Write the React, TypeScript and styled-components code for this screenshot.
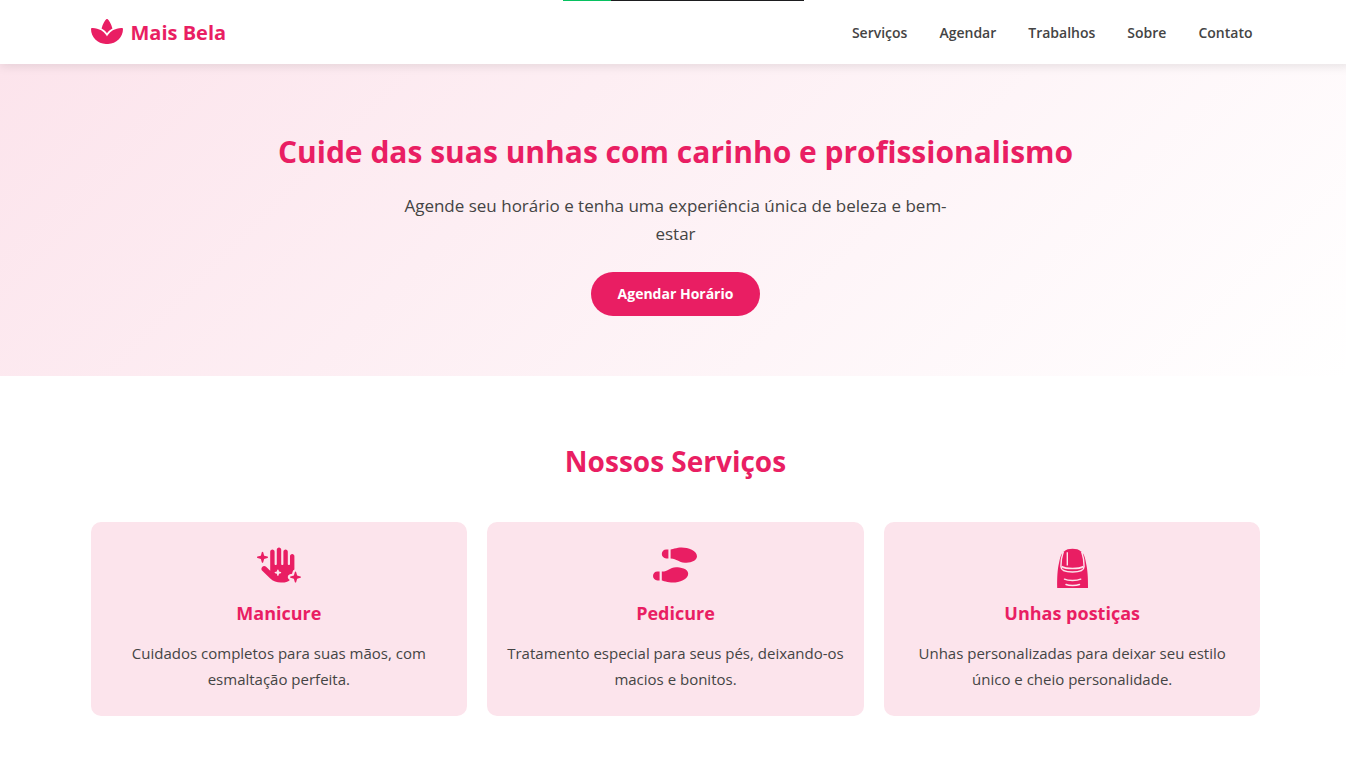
import React from "react";
import styled, { createGlobalStyle } from "styled-components";
import { FaSpa, FaHandSparkles, FaShoePrints } from "react-icons/fa6";

const pink = "#e91e63";
const blush = "#fce4ec";
const ink = "#444444";

const GlobalStyle = createGlobalStyle`
  *, *::before, *::after { box-sizing: border-box; }
  body {
    margin: 0;
    overflow-x: hidden;
    background: #ffffff;
    color: ${ink};
    font-family: "Segoe UI", "Open Sans", "Noto Sans", sans-serif;
    font-size: 15px;
    line-height: 26px;
  }
  h1, h2, h3, p, ul { margin: 0; padding: 0; }
`;

const Page = styled.div`
  position: relative;
  width: calc(100% + 5px);
`;

const Progress = styled.div`
  position: absolute;
  top: 0;
  left: 563px;
  z-index: 2;
  width: 241px;
  height: 1px;
  background: #1d1d1f;
`;

const ProgressFill = styled.div`
  width: 20%;
  height: 100%;
  background: #07c160;
`;

const Container = styled.div`
  max-width: 1200px;
  margin: 0 auto;
  padding: 0 15px;
`;

const Header = styled.header`
  position: relative;
  z-index: 1;
  background: #ffffff;
  box-shadow: 0 2px 10px rgba(0, 0, 0, 0.1);
`;

const HeaderRow = styled(Container)`
  display: flex;
  align-items: center;
  justify-content: space-between;
  min-height: 64px;
  padding-top: 2px;
`;

const Brand = styled.a`
  display: flex;
  align-items: center;
  gap: 8px;
  color: ${pink};
  font-size: 20px;
  font-weight: 700;
  text-decoration: none;

  svg {
    width: 32px;
    height: 29px;
    margin-bottom: 4px;
  }
`;

const NavList = styled.ul`
  display: flex;
  gap: 16px;
  list-style: none;
`;

const NavLink = styled.a`
  display: block;
  padding: 8px;
  color: ${ink};
  font-size: 14px;
  font-weight: 600;
  line-height: 24px;
  text-decoration: none;
`;

const Hero = styled.section`
  padding: 60px 0;
  background: linear-gradient(135deg, ${blush} 0%, #ffffff 100%);
  text-align: center;
`;

const HeroTitle = styled.h1`
  margin-bottom: 12px;
  color: ${pink};
  font-size: 30px;
  font-weight: 700;
  line-height: 56px;
`;

const HeroText = styled.p`
  max-width: 560px;
  margin: 0 auto 24px;
  font-size: 17px;
  line-height: 28px;
`;

const BookButton = styled.button`
  display: block;
  margin: 0 auto;
  padding: 12px 27px;
  border: 0;
  border-radius: 30px;
  background: ${pink};
  color: #ffffff;
  font-family: inherit;
  font-size: 14px;
  font-weight: 700;
  line-height: 20px;
  cursor: pointer;
`;

const Services = styled.section`
  padding: 60px 0 50px;
`;

const SectionTitle = styled.h2`
  margin-bottom: 36px;
  color: ${pink};
  font-size: 28px;
  font-weight: 700;
  line-height: 50px;
  text-align: center;
`;

const CardGrid = styled.div`
  display: grid;
  grid-template-columns: repeat(3, 1fr);
  gap: 20px;
`;

const Card = styled.article`
  padding: 25px 20px 24px;
  border-radius: 10px;
  background: ${blush};
  text-align: center;
`;

const IconSlot = styled.div`
  display: flex;
  align-items: flex-start;
  justify-content: center;
  height: 50px;
  color: ${pink};
`;

const GlyphIcon = styled.span`
  display: flex;

  svg {
    width: 44px;
    height: 36px;
  }
`;

const CardTitle = styled.h3`
  margin-bottom: 11px;
  color: ${pink};
  font-size: 18px;
  font-weight: 700;
  line-height: 32px;
`;

const CardText = styled.p`
  font-size: 15px;
  line-height: 26px;
`;

const NailIcon = () => (
  <svg width="40" height="41" viewBox="0 0 40 41" fill="none" aria-hidden="true">
    <path
      d="M5.2 41C5 31 5.5 22 7 16C7.8 12 8.6 8.5 10 6.5H31C32.5 8.500 33.300 12 34 16C35.500 22 36.200 31 36 41Z"
      fill={pink}
    />
    <path
      d="M12 4.500C14 2.500 17 1.800 20.500 1.800S27 2.500 29 4.500C31 8 32 14 32 20C30 22.500 26 24.500 20.500 24.500S11 22.500 9 20C9 14 10 8 12 4.500Z"
      fill={pink}
    />
    <path
      d="M11.200 5C9.600 9.500 8.900 14.500 8.900 19.500C8.900 23 13 25 20.500 25S32.100 23 32.100 19.500C32.100 14.500 31.400 9.500 29.800 5"
      stroke={blush}
      strokeWidth="1.400"
    />
    <path d="M9.500 19.500C14 22.300 27 22.300 31.500 19.500" stroke={blush} strokeWidth="1.500" />
    <path d="M15.300 5.300V18.500" stroke={blush} strokeWidth="1.400" />
    <path
      d="M12.500 32.200C16 34 25 34 28.700 32.200M14 37.500C17 38.800 24 38.800 27.500 37.500"
      stroke={blush}
      strokeWidth="1.500"
      strokeLinecap="round"
    />
  </svg>
);

const links = [
  { label: "Serviços", href: "#servicos" },
  { label: "Agendar", href: "#agendar" },
  { label: "Trabalhos", href: "#trabalhos" },
  { label: "Sobre", href: "#sobre" },
  { label: "Contato", href: "#contato" },
];

const services = [
  {
    title: "Manicure",
    text: "Cuidados completos para suas mãos, com esmaltação perfeita.",
    icon: <GlyphIcon><FaHandSparkles /></GlyphIcon>,
  },
  {
    title: "Pedicure",
    text: "Tratamento especial para seus pés, deixando-os macios e bonitos.",
    icon: <GlyphIcon><FaShoePrints /></GlyphIcon>,
  },
  {
    title: "Unhas postiças",
    text: "Unhas personalizadas para deixar seu estilo único e cheio personalidade.",
    icon: <NailIcon />,
  },
];

export default function App() {
  return (
    <Page>
      <GlobalStyle />
      <Progress>
        <ProgressFill />
      </Progress>
      <Header>
        <HeaderRow>
          <Brand href="#inicio">
            <FaSpa />
            Mais Bela
          </Brand>
          <nav>
            <NavList>
              {links.map((link) => (
                <li key={link.href}>
                  <NavLink href={link.href}>{link.label}</NavLink>
                </li>
              ))}
            </NavList>
          </nav>
        </HeaderRow>
      </Header>
      <main>
        <Hero id="inicio">
          <Container>
            <HeroTitle>Cuide das suas unhas com carinho e profissionalismo</HeroTitle>
            <HeroText>
              Agende seu horário e tenha uma experiência única de beleza e bem-estar
            </HeroText>
            <BookButton type="button">Agendar Horário</BookButton>
          </Container>
        </Hero>
        <Services id="servicos">
          <Container>
            <SectionTitle>Nossos Serviços</SectionTitle>
            <CardGrid>
              {services.map((service) => (
                <Card key={service.title}>
                  <IconSlot>{service.icon}</IconSlot>
                  <CardTitle>{service.title}</CardTitle>
                  <CardText>{service.text}</CardText>
                </Card>
              ))}
            </CardGrid>
          </Container>
        </Services>
      </main>
    </Page>
  );
}
